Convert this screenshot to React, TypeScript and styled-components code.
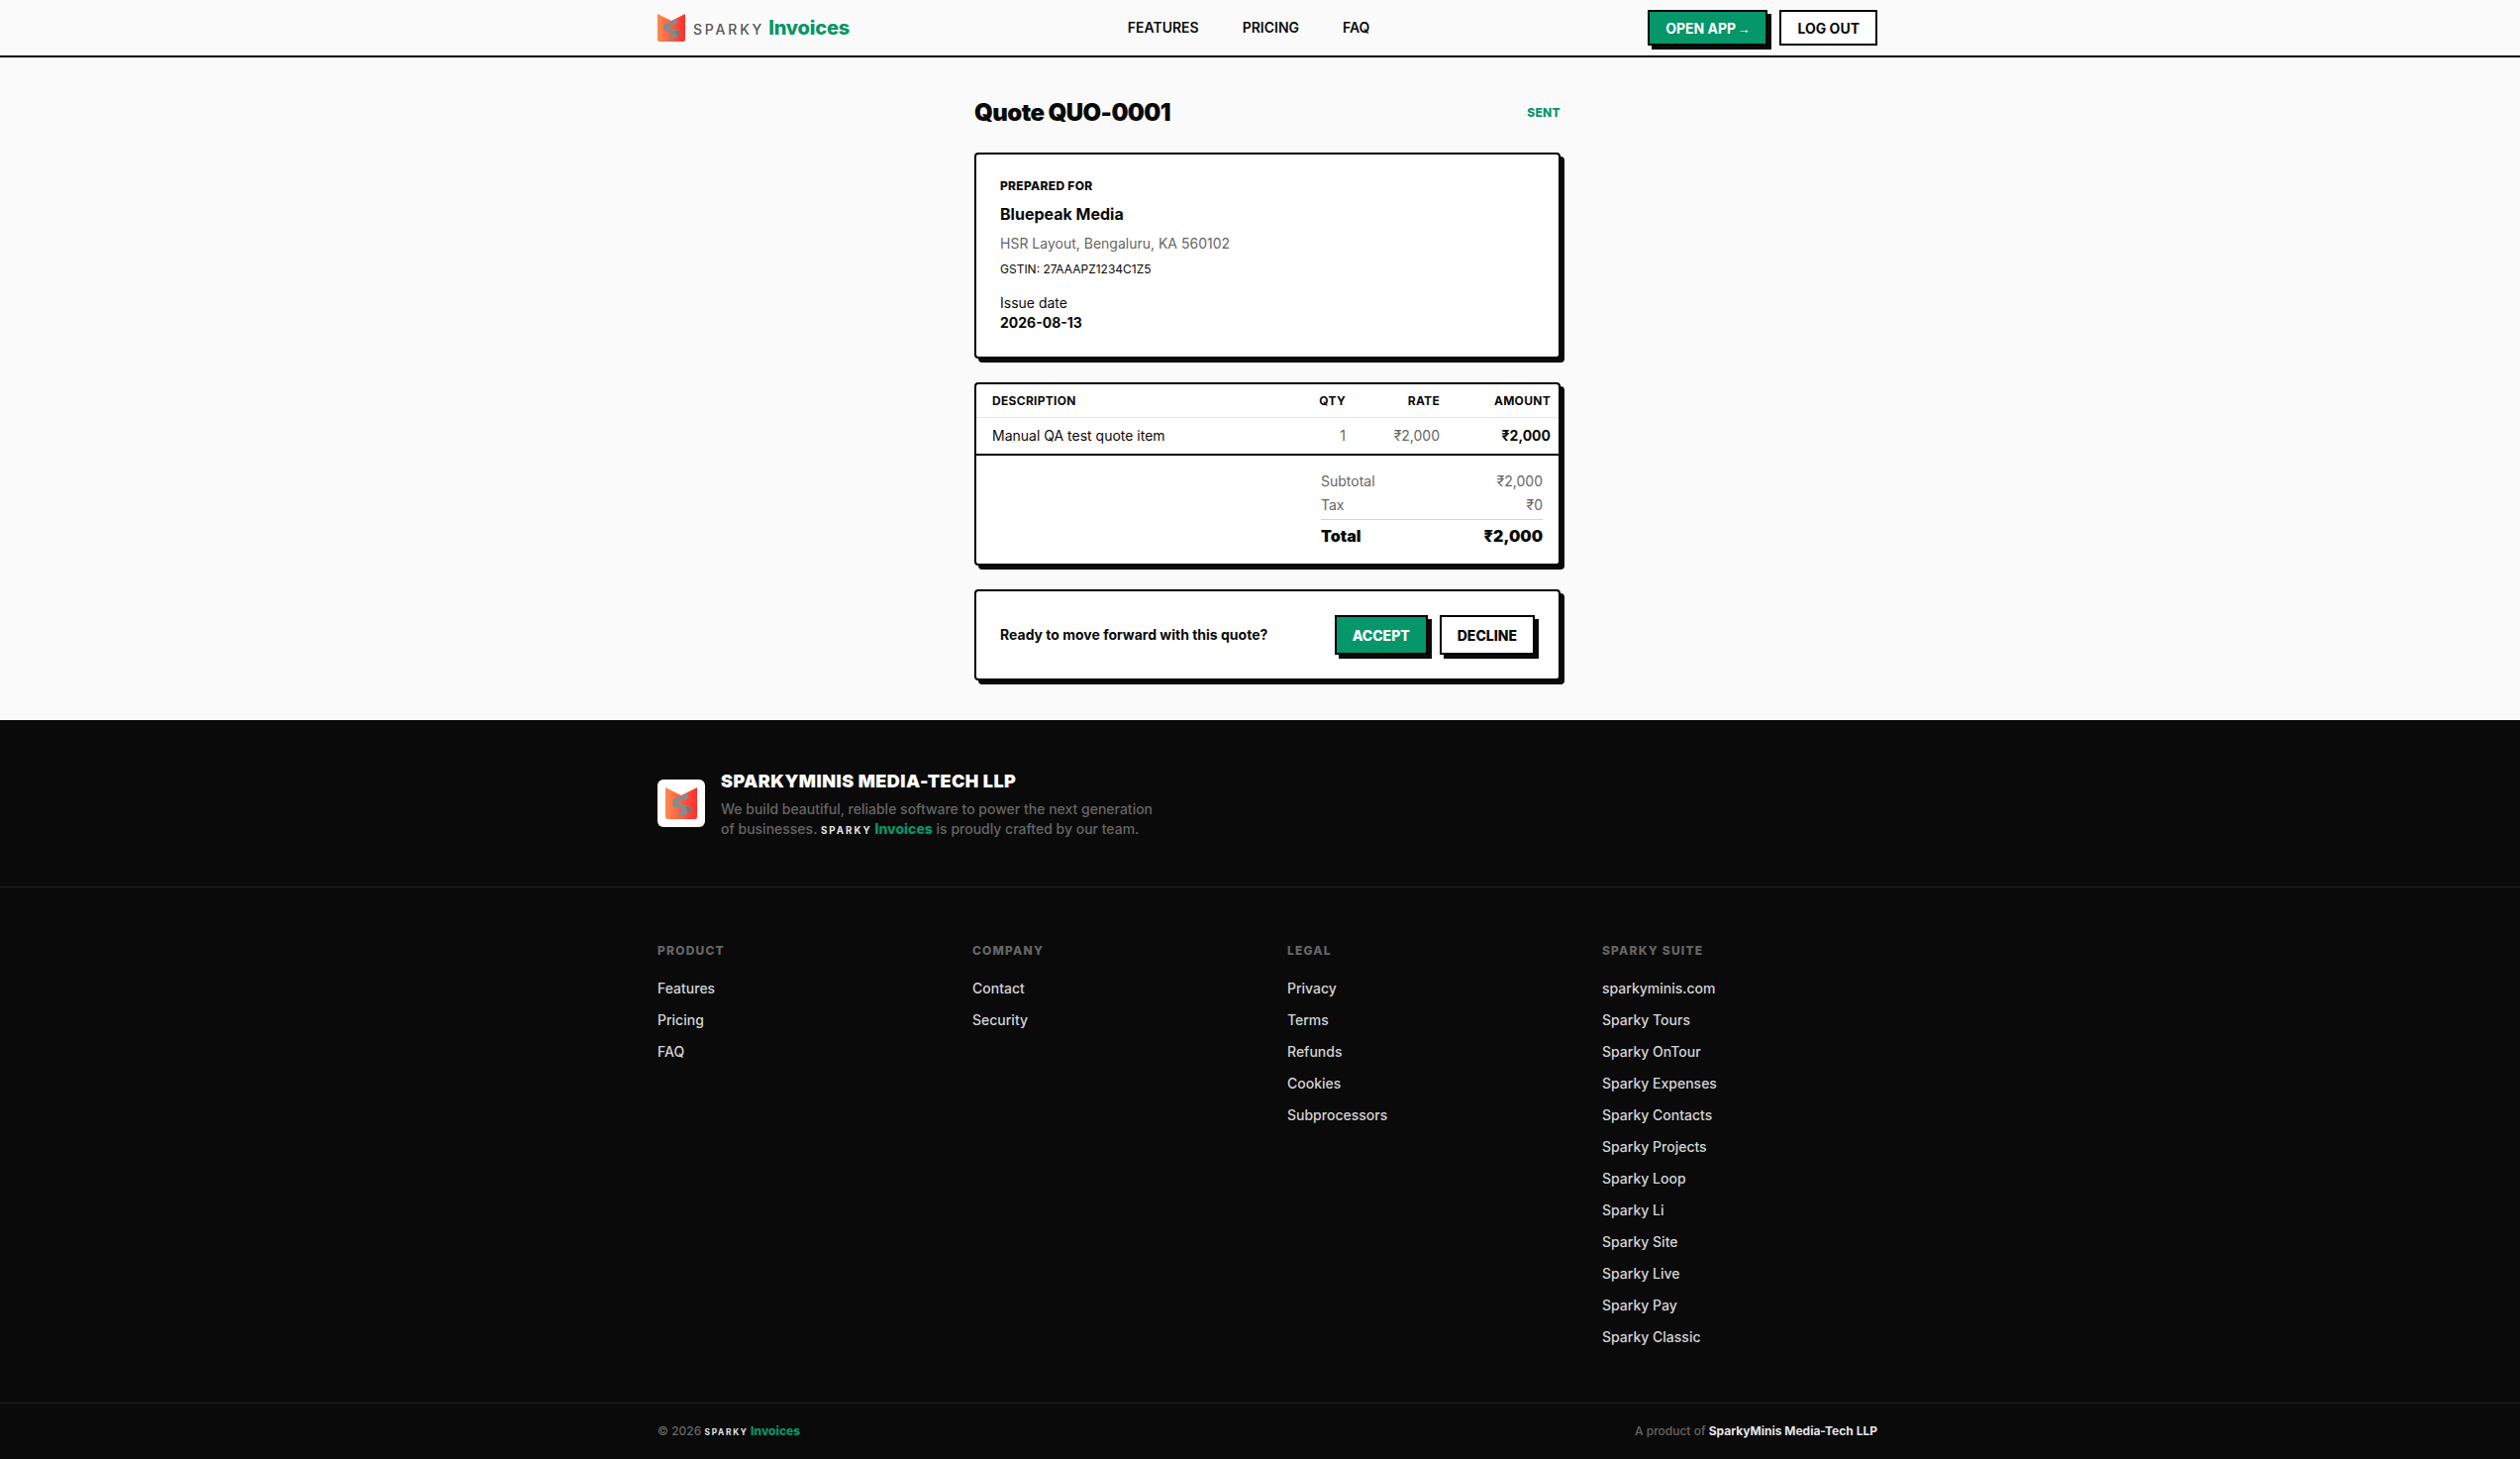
import React from 'react';
import styled, { createGlobalStyle } from 'styled-components';

const GREEN = '#059669';
const INK = '#0a0a0a';
const MUTED = '#666666';
const PAPER = '#fafafa';

const GlobalStyle = createGlobalStyle`
    html, body {
        margin: 0;
        padding: 0;
        overflow: hidden;
        background: ${PAPER};
    }
    body {
        font-family: Inter, "Liberation Sans", sans-serif;
        color: ${INK};
    }
    * {
        box-sizing: border-box;
    }
`;

const Page = styled.div`
    width: 2560px;
`;

const Wrap = styled.div`
    width: 1232px;
    margin: 0 auto;
`;

const Header = styled.header`
    height: 58px;
    background: ${PAPER};
    border-bottom: 2px solid #000;
`;

const HeaderRow = styled(Wrap)`
    height: 56px;
    display: flex;
    align-items: center;
    justify-content: space-between;
`;

const Brand = styled.div`
    display: flex;
    align-items: center;
    gap: 8px;
`;

const Wordmark = styled.span<{ $size: number }>`
    font-size: ${p => p.$size}px;
    line-height: 1;
    white-space: nowrap;
`;

const WordSparky = styled.span<{ $dark?: boolean }>`
    font-size: 0.7em;
    letter-spacing: 0.2em;
    font-weight: ${p => (p.$dark ? 700 : 500)};
    color: ${p => (p.$dark ? '#e5e5e5' : '#555555')};
`;

const WordInvoices = styled.span<{ $tight?: boolean }>`
    margin-left: 0.2em;
    font-weight: 800;
    letter-spacing: ${p => (p.$tight ? '-0.01em' : '0')};
    color: ${GREEN};
`;

const Nav = styled.nav`
    display: flex;
    gap: 44px;
`;

const NavLink = styled.a`
    font-size: 14px;
    line-height: 20px;
    font-weight: 600;
    text-transform: uppercase;
`;

const HeaderActions = styled.div`
    display: flex;
    gap: 12px;
`;

const Button = styled.button<{ $primary?: boolean; $shadow?: boolean; $height: number; $heavy?: boolean }>`
    height: ${p => p.$height}px;
    padding: 0 16px;
    border: 2px solid #000;
    background: ${p => (p.$primary ? GREEN : '#fff')};
    color: ${p => (p.$primary ? '#fff' : INK)};
    font-family: inherit;
    font-size: 14px;
    font-weight: ${p => (p.$heavy ? 800 : 700)};
    text-transform: uppercase;
    white-space: nowrap;
    box-shadow: ${p => (p.$shadow ? `4px 4px 0 ${INK}` : 'none')};
`;

const Arrow = styled.span`
    margin-left: -2px;
    font-family: "Liberation Sans", sans-serif;
    font-size: 13px;
    font-weight: 400;
`;

const Main = styled.main`
    width: 592px;
    margin: 0 auto;
    padding: 40px 0;
`;

const TitleRow = styled.div`
    display: flex;
    align-items: center;
    justify-content: space-between;
    margin-bottom: 24px;
`;

const Title = styled.h1`
    margin: 0;
    font-size: 24px;
    line-height: 32px;
    font-weight: 900;
    letter-spacing: -0.025em;
`;

const Status = styled.span`
    font-size: 12px;
    line-height: 16px;
    font-weight: 800;
    letter-spacing: 0.025em;
    color: ${GREEN};
`;

const Card = styled.section`
    background: #fff;
    border: 2px solid #000;
    border-radius: 4px;
    box-shadow: 4px 4px 0 ${INK};
    margin-bottom: 24px;

    &:last-child {
        margin-bottom: 0;
    }
`;

const PreparedCard = styled(Card)`
    padding: 24px;
`;

const SmallCaps = styled.div`
    font-size: 12px;
    line-height: 16px;
    font-weight: 800;
    letter-spacing: 0.025em;
    text-transform: uppercase;
`;

const ClientName = styled.div`
    margin-top: 8px;
    font-size: 16px;
    line-height: 24px;
    font-weight: 700;
`;

const Address = styled.div`
    margin-top: 8px;
    font-size: 14px;
    line-height: 20px;
    color: ${MUTED};
`;

const Gstin = styled.div`
    margin-top: 8px;
    font-size: 12px;
    line-height: 16px;
`;

const DateLabel = styled.div`
    margin-top: 16px;
    font-size: 14px;
    line-height: 20px;
`;

const DateValue = styled.div`
    font-size: 14px;
    line-height: 20px;
    font-weight: 700;
`;

const LineRow = styled.div<{ $head?: boolean }>`
    display: grid;
    grid-template-columns: 1fr 60px 95px 112px;
    align-items: center;
    padding: 0 8px 0 16px;
    height: ${p => (p.$head ? 34 : 38)}px;
    border-bottom: ${p => (p.$head ? '1px solid #e5e5e5' : '2px solid #000')};
`;

const HeadCell = styled.div<{ $right?: boolean }>`
    font-size: 12px;
    line-height: 16px;
    font-weight: 700;
    letter-spacing: 0.025em;
    text-transform: uppercase;
    text-align: ${p => (p.$right ? 'right' : 'left')};
`;

const BodyCell = styled.div<{ $right?: boolean; $muted?: boolean; $bold?: boolean }>`
    font-size: 14px;
    line-height: 20px;
    text-align: ${p => (p.$right ? 'right' : 'left')};
    color: ${p => (p.$muted ? MUTED : INK)};
    font-weight: ${p => (p.$bold ? 700 : 400)};
`;

const Totals = styled.div`
    width: 224px;
    margin-left: auto;
    padding: 16px 0;
    margin-right: 16px;
`;

const TotalLine = styled.div`
    display: flex;
    justify-content: space-between;
    font-size: 14px;
    line-height: 20px;
    color: ${MUTED};
    margin-bottom: 4px;
`;

const GrandTotal = styled.div`
    display: flex;
    justify-content: space-between;
    border-top: 1px solid #d4d4d4;
    padding-top: 4px;
    font-size: 16px;
    line-height: 24px;
    font-weight: 900;
`;

const ActionCard = styled(Card)`
    padding: 24px;
    display: flex;
    align-items: center;
    justify-content: space-between;
`;

const ActionText = styled.div`
    font-size: 14px;
    line-height: 20px;
    font-weight: 700;
`;

const ActionButtons = styled.div`
    display: flex;
    gap: 12px;
`;

const Footer = styled.footer`
    background: ${INK};
    color: #d4d4d4;
`;

const FooterTop = styled(Wrap)`
    display: flex;
    align-items: center;
    gap: 16px;
    padding: 48px 0;
`;

const LogoTile = styled.div`
    width: 48px;
    height: 48px;
    flex: none;
    background: #fff;
    border-radius: 6px;
    display: flex;
    align-items: center;
    justify-content: center;
`;

const CompanyName = styled.div`
    font-size: 18px;
    line-height: 28px;
    font-weight: 900;
    letter-spacing: 0.025em;
    color: #fff;
    margin-bottom: 4px;
`;

const CompanyBlurb = styled.p`
    margin: 0;
    font-size: 14px;
    line-height: 20px;
    font-weight: 500;
    color: ${MUTED};
`;

const Rule = styled.div`
    height: 1px;
    background: #1f1f1f;
`;

const Columns = styled(Wrap)`
    display: grid;
    grid-template-columns: repeat(4, 1fr);
    gap: 40px;
    padding: 56px 0;
`;

const ColumnTitle = styled.div`
    font-size: 12px;
    line-height: 16px;
    font-weight: 800;
    letter-spacing: 0.1em;
    text-transform: uppercase;
    color: ${MUTED};
    margin-bottom: 20px;
`;

const LinkList = styled.div`
    display: flex;
    flex-direction: column;
    gap: 12px;
`;

const FooterLink = styled.a`
    font-size: 14px;
    line-height: 20px;
    font-weight: 500;
    color: #d4d4d4;
`;

const BottomBar = styled(Wrap)`
    display: flex;
    justify-content: space-between;
    align-items: center;
    padding: 20px 0;
    font-size: 12px;
    line-height: 16px;
    font-weight: 500;
    color: ${MUTED};
`;

const Strong = styled.span`
    font-weight: 700;
    color: #e5e5e5;
`;

const LogoMark = ({ size }: { size: number }) => {
    const id = `logo-grad-${size}`;
    return (
        <svg width={size} height={size} viewBox="0 0 28 28" aria-hidden="true">
            <defs>
                <linearGradient id={id} x1="0" y1="0" x2="1" y2="0">
                    <stop offset="0" stopColor="#ff8a50" />
                    <stop offset="1" stopColor="#ff2e2e" />
                </linearGradient>
            </defs>
            <path d="M0 0 L14 7 L28 0 V26 Q28 28 26 28 H2 Q0 28 0 26 Z" fill={`url(#${id})`} />
            <path
                d="M20 7 L8.5 12 V15.5 L20 18.5 V20.5 L12 24.5"
                fill="none"
                stroke="#8a8a8a"
                strokeWidth="4.4"
                strokeLinejoin="round"
            />
            <path d="M18 16.6 L22.2 17.8 V21.8 L20 22.9 Z" fill="#767676" />
        </svg>
    );
};

const Brandname = ({ size, dark, tight }: { size: number; dark?: boolean; tight?: boolean }) => (
    <Wordmark $size={size}>
        <WordSparky $dark={dark}>SPARKY</WordSparky>
        <WordInvoices $tight={tight}>Invoices</WordInvoices>
    </Wordmark>
);

const FOOTER_COLUMNS = [
    { title: 'Product', links: ['Features', 'Pricing', 'FAQ'] },
    { title: 'Company', links: ['Contact', 'Security'] },
    { title: 'Legal', links: ['Privacy', 'Terms', 'Refunds', 'Cookies', 'Subprocessors'] },
    {
        title: 'Sparky Suite',
        links: [
            'sparkyminis.com',
            'Sparky Tours',
            'Sparky OnTour',
            'Sparky Expenses',
            'Sparky Contacts',
            'Sparky Projects',
            'Sparky Loop',
            'Sparky Li',
            'Sparky Site',
            'Sparky Live',
            'Sparky Pay',
            'Sparky Classic',
        ],
    },
];

export default function App() {
    return (
        <Page>
            <GlobalStyle />
            <Header>
                <HeaderRow>
                    <Brand>
                        <LogoMark size={28} />
                        <Brandname size={20} tight />
                    </Brand>
                    <Nav>
                        <NavLink>Features</NavLink>
                        <NavLink>Pricing</NavLink>
                        <NavLink>FAQ</NavLink>
                    </Nav>
                    <HeaderActions>
                        <Button $primary $shadow $height={36}>Open App <Arrow>→</Arrow></Button>
                        <Button $height={36}>Log out</Button>
                    </HeaderActions>
                </HeaderRow>
            </Header>
            <Main>
                <TitleRow>
                    <Title>Quote QUO-0001</Title>
                    <Status>SENT</Status>
                </TitleRow>
                <PreparedCard>
                    <SmallCaps>Prepared for</SmallCaps>
                    <ClientName>Bluepeak Media</ClientName>
                    <Address>HSR Layout, Bengaluru, KA 560102</Address>
                    <Gstin>GSTIN: 27AAAPZ1234C1Z5</Gstin>
                    <DateLabel>Issue date</DateLabel>
                    <DateValue>2026-08-13</DateValue>
                </PreparedCard>
                <Card>
                    <LineRow $head>
                        <HeadCell>Description</HeadCell>
                        <HeadCell $right>Qty</HeadCell>
                        <HeadCell $right>Rate</HeadCell>
                        <HeadCell $right>Amount</HeadCell>
                    </LineRow>
                    <LineRow>
                        <BodyCell>Manual QA test quote item</BodyCell>
                        <BodyCell $right $muted>1</BodyCell>
                        <BodyCell $right $muted>₹2,000</BodyCell>
                        <BodyCell $right $bold>₹2,000</BodyCell>
                    </LineRow>
                    <Totals>
                        <TotalLine><span>Subtotal</span><span>₹2,000</span></TotalLine>
                        <TotalLine><span>Tax</span><span>₹0</span></TotalLine>
                        <GrandTotal><span>Total</span><span>₹2,000</span></GrandTotal>
                    </Totals>
                </Card>
                <ActionCard>
                    <ActionText>Ready to move forward with this quote?</ActionText>
                    <ActionButtons>
                        <Button $primary $shadow $heavy $height={40}>Accept</Button>
                        <Button $shadow $heavy $height={40}>Decline</Button>
                    </ActionButtons>
                </ActionCard>
            </Main>
            <Footer>
                <FooterTop>
                    <LogoTile><LogoMark size={32} /></LogoTile>
                    <div>
                        <CompanyName>SPARKYMINIS MEDIA-TECH LLP</CompanyName>
                        <CompanyBlurb>
                            We build beautiful, reliable software to power the next generation
                            <br />
                            of businesses. <Brandname size={14} dark /> is proudly crafted by our team.
                        </CompanyBlurb>
                    </div>
                </FooterTop>
                <Rule />
                <Columns>
                    {FOOTER_COLUMNS.map(col => (
                        <div key={col.title}>
                            <ColumnTitle>{col.title}</ColumnTitle>
                            <LinkList>
                                {col.links.map(link => <FooterLink key={link}>{link}</FooterLink>)}
                            </LinkList>
                        </div>
                    ))}
                </Columns>
                <Rule />
                <BottomBar>
                    <span>© 2026 <Brandname size={12} dark /></span>
                    <span>A product of <Strong>SparkyMinis Media-Tech LLP</Strong></span>
                </BottomBar>
            </Footer>
        </Page>
    );
}
